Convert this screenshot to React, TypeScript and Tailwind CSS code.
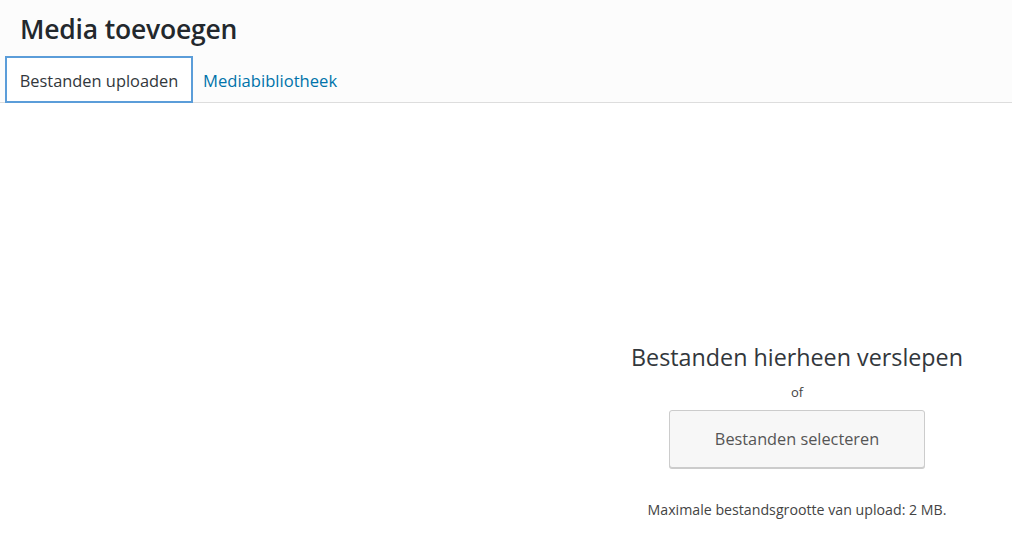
import React from "react";

export default function App() {
  return (
    <div
      className="w-[1012px] h-[549px] bg-white overflow-hidden"
      style={{ fontFamily: '"Open Sans", "Noto Sans", sans-serif' }}
    >
      <div className="bg-[#fcfcfc] border-b border-[#dddddd] h-[103px] flex flex-col">
        <h1 className="pl-[20px] pt-[11px] h-[56px] text-[26.5px] leading-[36px] font-semibold text-[#23282d] tracking-[-0.2px]">
          Media toevoegen
        </h1>
        <div className="flex pl-[5px] items-end">
          <div className="h-[47px] w-[188px] border-2 border-[#5b9dd9] bg-white flex items-center justify-center pt-[4px] text-[16.4px] text-[#32373c] -mb-px">
            Bestanden uploaden
          </div>
          <div className="h-[46px] px-[10px] pt-[4px] flex items-center text-[16.6px] text-[#0073aa]">
            Mediabibliotheek
          </div>
        </div>
      </div>
      <div className="ml-[582px] flex flex-col items-center pt-[238px]">
        <div className="text-[23.3px] leading-[32px] text-[#32373c]">
          Bestanden hierheen verslepen
        </div>
        <div className="text-[13px] leading-[18px] mt-[10px] text-[#444]">of</div>
        <button className="mt-[9px] w-[256px] h-[58px] bg-[#f7f7f7] border border-[#cccccc] rounded-[3px] shadow-[0_1px_0_#cccccc] text-[16.3px] text-[#555]">
          Bestanden selecteren
        </button>
        <div className="mt-[32px] text-[14.2px] leading-[20px] text-[#444]">
          Maximale bestandsgrootte van upload: 2 MB.
        </div>
      </div>
    </div>
  );
}
